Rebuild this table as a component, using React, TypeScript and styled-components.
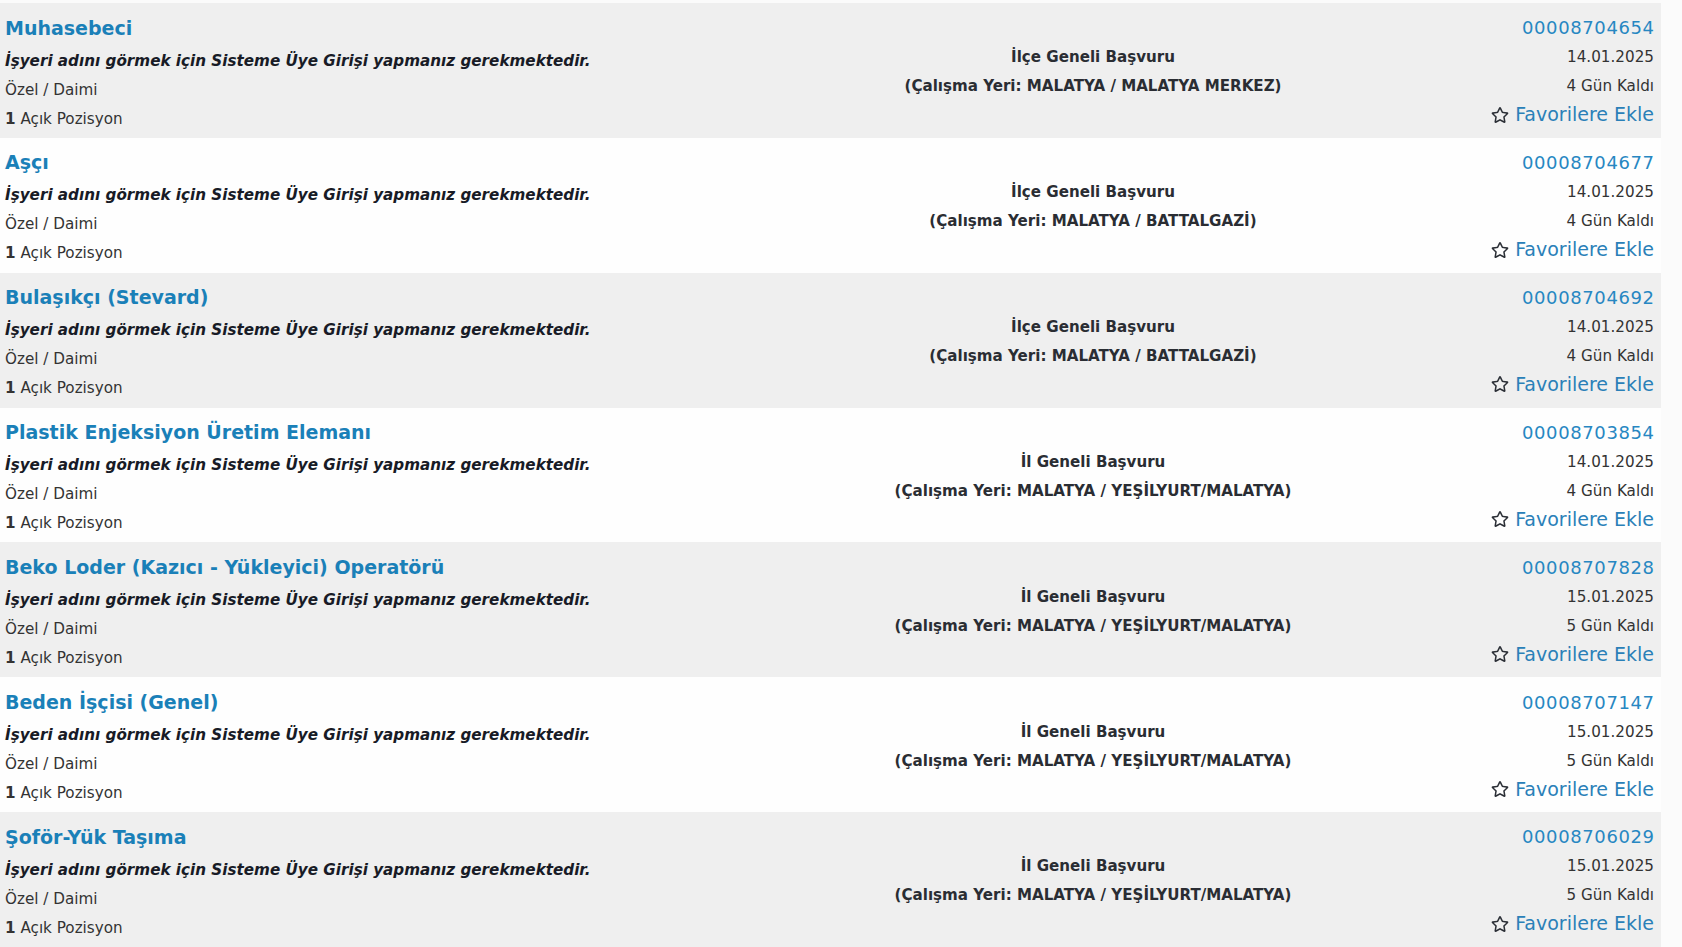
import { FC } from "react"
import styled, { createGlobalStyle } from "styled-components"
import { FaRegStar } from "react-icons/fa"

type Job = {
  title: string
  scope: string
  place: string
  no: string
  date: string
  left: string
}

const jobs: Job[] = [
  { title: "Muhasebeci", scope: "İlçe Geneli Başvuru", place: "MALATYA / MALATYA MERKEZ", no: "00008704654", date: "14.01.2025", left: "4 Gün Kaldı" },
  { title: "Aşçı", scope: "İlçe Geneli Başvuru", place: "MALATYA / BATTALGAZİ", no: "00008704677", date: "14.01.2025", left: "4 Gün Kaldı" },
  { title: "Bulaşıkçı (Stevard)", scope: "İlçe Geneli Başvuru", place: "MALATYA / BATTALGAZİ", no: "00008704692", date: "14.01.2025", left: "4 Gün Kaldı" },
  { title: "Plastik Enjeksiyon Üretim Elemanı", scope: "İl Geneli Başvuru", place: "MALATYA / YEŞİLYURT/MALATYA", no: "00008703854", date: "14.01.2025", left: "4 Gün Kaldı" },
  { title: "Beko Loder (Kazıcı - Yükleyici) Operatörü", scope: "İl Geneli Başvuru", place: "MALATYA / YEŞİLYURT/MALATYA", no: "00008707828", date: "15.01.2025", left: "5 Gün Kaldı" },
  { title: "Beden İşçisi (Genel)", scope: "İl Geneli Başvuru", place: "MALATYA / YEŞİLYURT/MALATYA", no: "00008707147", date: "15.01.2025", left: "5 Gün Kaldı" },
  { title: "Şoför-Yük Taşıma", scope: "İl Geneli Başvuru", place: "MALATYA / YEŞİLYURT/MALATYA", no: "00008706029", date: "15.01.2025", left: "5 Gün Kaldı" },
]

const GlobalStyle = createGlobalStyle`
  html, body {
    margin: 0;
    padding: 0;
    background: #f9f9f9;
    font-family: "DejaVu Sans", Verdana, sans-serif;
    overflow: hidden;
  }
`

export default function App() {
  return (
    <>
      <GlobalStyle />
      <Page>
        <List>
          {jobs.map((job, i) => (
            <JobRow key={job.no} job={job} shaded={i % 2 === 0} />
          ))}
        </List>
      </Page>
    </>
  )
}

const JobRow: FC<{ job: Job; shaded: boolean }> = ({ job, shaded }) => (
  <Row $shaded={shaded}>
    <Info>
      <Title href="#">{job.title}</Title>
      <Notice>İşyeri adını görmek için Sisteme Üye Girişi yapmanız gerekmektedir.</Notice>
      <Line>Özel / Daimi</Line>
      <Line><b>1</b> Açık Pozisyon</Line>
    </Info>
    <Scope>
      <div>{job.scope}</div>
      <div>(Çalışma Yeri: {job.place})</div>
    </Scope>
    <Meta>
      <JobNo href="#">{job.no}</JobNo>
      <Line>{job.date}</Line>
      <Line>{job.left}</Line>
      <Fav href="#">
        <FaRegStar size={18} color="#2b2f36" />
        Favorilere Ekle
      </Fav>
    </Meta>
  </Row>
)

const Page = styled.div`
  width: 1682px;
  height: 947px;
  padding-top: 3px;
  box-sizing: border-box;
  background: #fbfbfb;
`

const List = styled.div`
  width: 1661px;
  display: flex;
  flex-direction: column;
`

const Row = styled.div<{ $shaded: boolean }>`
  height: 134.85px;
  box-sizing: border-box;
  padding: 0 7px 0 5px;
  display: grid;
  grid-template-columns: 1fr 560px 281px;
  background: ${(p) => (p.$shaded ? "#efefef" : "#fefefe")};
`

const Info = styled.div`
  display: flex;
  flex-direction: column;
  padding-top: 10.5px;
`

const Title = styled.a`
  font-size: 19px;
  line-height: 28px;
  font-weight: 700;
  color: #1a80b8;
  text-decoration: none;
  margin-bottom: 5px;
  align-self: flex-start;
`

const Notice = styled.div`
  font-size: 15.2px;
  line-height: 29px;
  font-weight: 700;
  font-style: italic;
  color: #181b26;
`

const Line = styled.div`
  font-size: 15.2px;
  line-height: 29px;
  color: #333;
`

const Scope = styled.div`
  padding-top: 40.3px;
  text-align: center;
  font-size: 15.1px;
  line-height: 29px;
  font-weight: 700;
  color: #2a2d33;
`

const Meta = styled.div`
  display: flex;
  flex-direction: column;
  align-items: flex-end;
  padding-top: 10.3px;
  text-align: right;
`

const JobNo = styled.a`
  font-size: 18px;
  line-height: 30px;
  letter-spacing: 0.6px;
  margin-right: -0.6px;
  color: #2787c2;
  text-decoration: none;
`

const Fav = styled.a`
  display: flex;
  align-items: center;
  gap: 6px;
  font-size: 19px;
  line-height: 27px;
  color: #2a80b8;
  text-decoration: none;
`
